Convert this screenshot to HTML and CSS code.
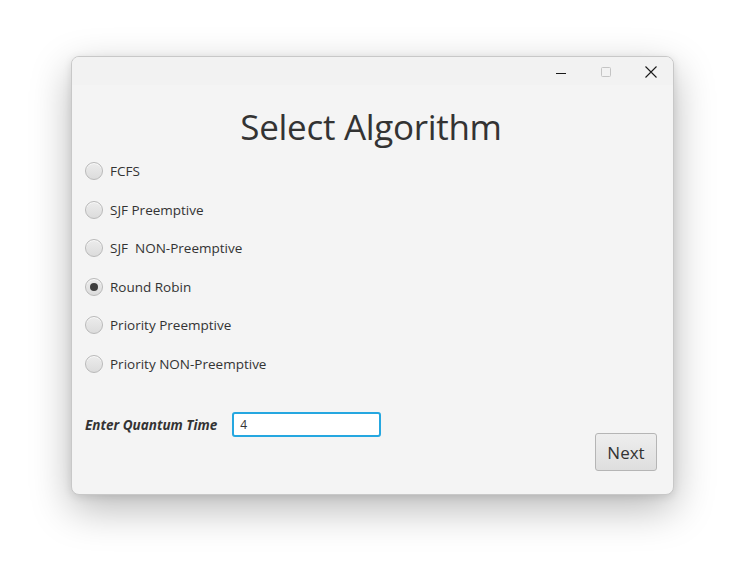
FILE: index.html
```html
<!DOCTYPE html>
<html>
<head>
<meta charset="utf-8">
<link rel="stylesheet" href="styles.css">
</head>
<body>
<div class="window">
  <div class="titlebar">
    <span class="ctl ctl-min"><svg width="12" height="12" viewBox="0 0 12 12"><path d="M1 6.5H11" stroke="#1a1a1a" stroke-width="1"/></svg></span>
    <span class="ctl ctl-max"><svg width="12" height="12" viewBox="0 0 12 12"><rect x="1.5" y="1.5" width="9" height="9" rx="1" fill="none" stroke="#c4c4c4" stroke-width="1"/></svg></span>
    <span class="ctl ctl-close"><svg width="12" height="12" viewBox="0 0 12 12"><path d="M0.5 0.5L11.5 11.5M11.5 0.5L0.5 11.5" stroke="#1a1a1a" stroke-width="1.1"/></svg></span>
  </div>
  <div class="content">
    <h1 class="heading">Select Algorithm</h1>
    <div class="options">
      <label class="opt"><span class="radio"></span><span class="opt-text">FCFS</span></label>
      <label class="opt"><span class="radio"></span><span class="opt-text">SJF Preemptive</span></label>
      <label class="opt"><span class="radio"></span><span class="opt-text">SJF&nbsp; NON-Preemptive</span></label>
      <label class="opt"><span class="radio checked"></span><span class="opt-text">Round Robin</span></label>
      <label class="opt"><span class="radio"></span><span class="opt-text">Priority Preemptive</span></label>
      <label class="opt"><span class="radio"></span><span class="opt-text">Priority NON-Preemptive</span></label>
    </div>
    <div class="bottom">
      <div class="quantum">
        <span class="q-label">Enter Quantum Time</span>
        <div class="q-input">4</div>
      </div>
      <button class="next">Next</button>
    </div>
  </div>
</div>
</body>
</html>
```

FILE: styles.css
```css
html, body {
  margin: 0;
  padding: 0;
  background: #ffffff;
}
body {
  min-height: 561px;
  box-sizing: border-box;
  padding: 56px 0 0 71px;
  font-family: "Open Sans", "Noto Sans", sans-serif;
  color: #333333;
}
.window {
  width: 601px;
  height: 437px;
  background: #f4f4f4;
  border: 1px solid #c8c8c8;
  border-radius: 8px;
  box-shadow: 0 14px 40px rgba(0,0,0,0.28), 0 2px 8px rgba(0,0,0,0.10);
  display: flex;
  flex-direction: column;
  overflow: hidden;
}
.titlebar {
  height: 27px;
  padding-top: 1px;
  background: #f2f2f2;
  display: flex;
  justify-content: flex-end;
  align-items: center;
  padding-right: 16px;
  gap: 33px;
}
.ctl {
  width: 12px;
  height: 12px;
  display: flex;
}
.ctl-min { margin-top: 2px; }
.content {
  flex: 1;
  display: flex;
  flex-direction: column;
  padding: 0 16px 23px 13px;
}
.heading {
  margin: 20px 0 0 0;
  font-weight: 400;
  font-size: 35px;
  line-height: 44px;
  text-align: center;
  color: #333333;
  letter-spacing: -0.3px;
}
.options {
  display: flex;
  flex-direction: column;
  gap: 20.6px;
  margin-top: 13px;
}
.opt {
  display: flex;
  align-items: center;
  height: 18px;
  gap: 7px;
}
.radio {
  width: 16px;
  height: 16px;
  border-radius: 50%;
  border: 1px solid #b9b9b9;
  background: linear-gradient(#ececec, #dcdcdc);
  box-shadow: inset 0 1px 0 #fafafa;
  display: flex;
  align-items: center;
  justify-content: center;
}
.radio.checked::after {
  content: "";
  width: 8px;
  height: 8px;
  border-radius: 50%;
  background: #3f3f3f;
}
.opt-text {
  font-size: 13.5px;
  color: #333333;
}
.bottom {
  flex: 1;
  display: flex;
  justify-content: space-between;
  align-items: flex-end;
}
.quantum {
  display: flex;
  align-items: center;
  gap: 15px;
  margin-bottom: 34px;
}
.q-label {
  font-size: 13.5px;
  font-weight: 700;
  font-style: italic;
  color: #333333;
}
.q-input {
  width: 139px;
  height: 21px;
  border: 2px solid #25a7e0;
  border-radius: 3px;
  background: #ffffff;
  font-size: 12px;
  line-height: 21px;
  padding-left: 6px;
  color: #333333;
  box-sizing: content-box;
}
.next {
  width: 62px;
  height: 38px;
  border: 1px solid #b5b5b5;
  border-radius: 3px;
  background: linear-gradient(#eeeeee, #dedede);
  font-family: "Open Sans", "Noto Sans", sans-serif;
  font-size: 17px;
  color: #333333;
  padding: 0;
}
```
